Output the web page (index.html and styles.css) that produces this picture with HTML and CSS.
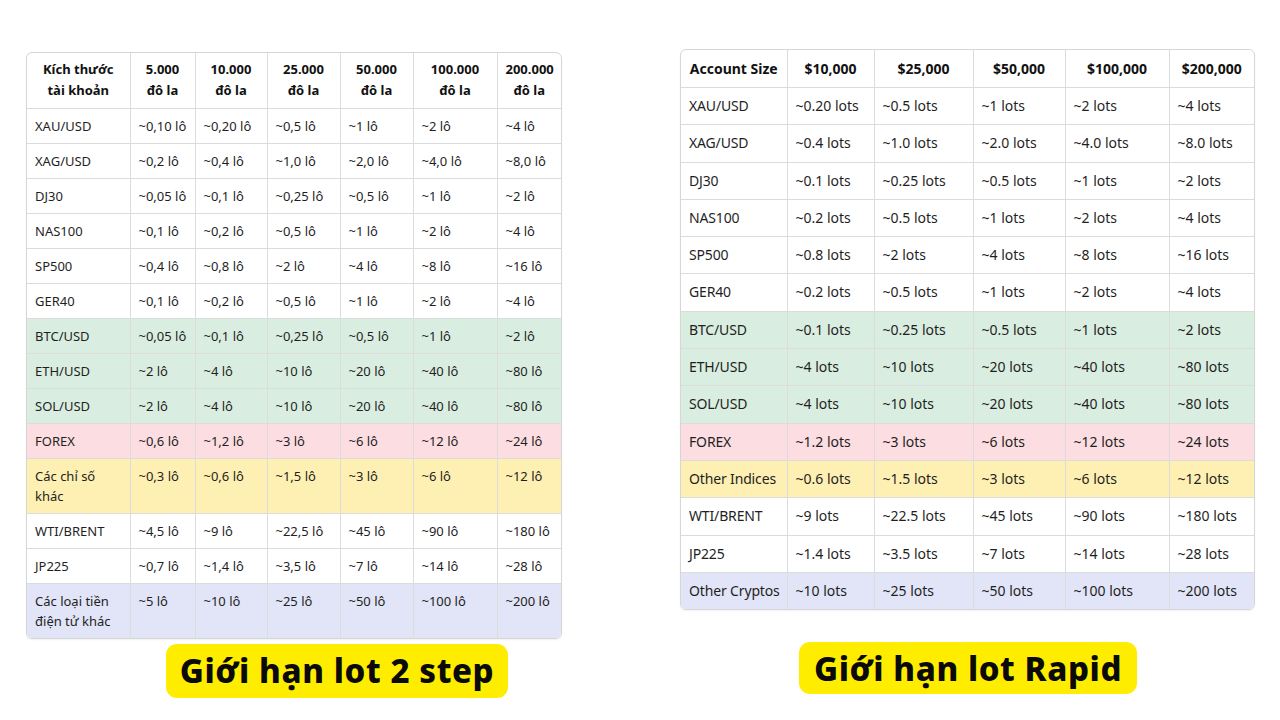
FILE: index.html
```html
<!DOCTYPE html>
<html lang="vi">
<head>
<meta charset="utf-8">
<title>Giới hạn lot</title>
<link rel="stylesheet" href="styles.css">
</head>
<body>
<div class="page">
  <section class="col col-left">
    <div class="tbl-wrap">
      <table class="tbl tbl-vn">
        <colgroup>
          <col class="c1"><col class="c2"><col class="c3"><col class="c4"><col class="c5"><col class="c6"><col class="c7">
        </colgroup>
        <thead>
          <tr><th>Kích thước tài khoản</th><th>5.000<br>đô la</th><th>10.000<br>đô la</th><th>25.000<br>đô la</th><th>50.000<br>đô la</th><th>100.000<br>đô la</th><th>200.000<br>đô la</th></tr>
        </thead>
        <tbody>
          <tr><td>XAU/USD</td><td>~0,10 lô</td><td>~0,20 lô</td><td>~0,5 lô</td><td>~1 lô</td><td>~2 lô</td><td>~4 lô</td></tr>
          <tr><td>XAG/USD</td><td>~0,2 lô</td><td>~0,4 lô</td><td>~1,0 lô</td><td>~2,0 lô</td><td>~4,0 lô</td><td>~8,0 lô</td></tr>
          <tr><td>DJ30</td><td>~0,05 lô</td><td>~0,1 lô</td><td>~0,25 lô</td><td>~0,5 lô</td><td>~1 lô</td><td>~2 lô</td></tr>
          <tr><td>NAS100</td><td>~0,1 lô</td><td>~0,2 lô</td><td>~0,5 lô</td><td>~1 lô</td><td>~2 lô</td><td>~4 lô</td></tr>
          <tr><td>SP500</td><td>~0,4 lô</td><td>~0,8 lô</td><td>~2 lô</td><td>~4 lô</td><td>~8 lô</td><td>~16 lô</td></tr>
          <tr><td>GER40</td><td>~0,1 lô</td><td>~0,2 lô</td><td>~0,5 lô</td><td>~1 lô</td><td>~2 lô</td><td>~4 lô</td></tr>
          <tr class="green"><td>BTC/USD</td><td>~0,05 lô</td><td>~0,1 lô</td><td>~0,25 lô</td><td>~0,5 lô</td><td>~1 lô</td><td>~2 lô</td></tr>
          <tr class="green"><td>ETH/USD</td><td>~2 lô</td><td>~4 lô</td><td>~10 lô</td><td>~20 lô</td><td>~40 lô</td><td>~80 lô</td></tr>
          <tr class="green"><td>SOL/USD</td><td>~2 lô</td><td>~4 lô</td><td>~10 lô</td><td>~20 lô</td><td>~40 lô</td><td>~80 lô</td></tr>
          <tr class="pink"><td>FOREX</td><td>~0,6 lô</td><td>~1,2 lô</td><td>~3 lô</td><td>~6 lô</td><td>~12 lô</td><td>~24 lô</td></tr>
          <tr class="yellow"><td>Các chỉ số khác</td><td>~0,3 lô</td><td>~0,6 lô</td><td>~1,5 lô</td><td>~3 lô</td><td>~6 lô</td><td>~12 lô</td></tr>
          <tr><td>WTI/BRENT</td><td>~4,5 lô</td><td>~9 lô</td><td>~22,5 lô</td><td>~45 lô</td><td>~90 lô</td><td>~180 lô</td></tr>
          <tr><td>JP225</td><td>~0,7 lô</td><td>~1,4 lô</td><td>~3,5 lô</td><td>~7 lô</td><td>~14 lô</td><td>~28 lô</td></tr>
          <tr class="lavender"><td>Các loại tiền điện tử khác</td><td>~5 lô</td><td>~10 lô</td><td>~25 lô</td><td>~50 lô</td><td>~100 lô</td><td>~200 lô</td></tr>
        </tbody>
      </table>
    </div>
    <div class="label label-left">Giới hạn lot 2 step</div>
  </section>

  <section class="col col-right">
    <div class="tbl-wrap">
      <table class="tbl tbl-en">
        <colgroup>
          <col class="d1"><col class="d2"><col class="d3"><col class="d4"><col class="d5"><col class="d6">
        </colgroup>
        <thead>
          <tr><th>Account Size</th><th>$10,000</th><th>$25,000</th><th>$50,000</th><th>$100,000</th><th>$200,000</th></tr>
        </thead>
        <tbody>
          <tr><td>XAU/USD</td><td>~0.20 lots</td><td>~0.5 lots</td><td>~1 lots</td><td>~2 lots</td><td>~4 lots</td></tr>
          <tr><td>XAG/USD</td><td>~0.4 lots</td><td>~1.0 lots</td><td>~2.0 lots</td><td>~4.0 lots</td><td>~8.0 lots</td></tr>
          <tr><td>DJ30</td><td>~0.1 lots</td><td>~0.25 lots</td><td>~0.5 lots</td><td>~1 lots</td><td>~2 lots</td></tr>
          <tr><td>NAS100</td><td>~0.2 lots</td><td>~0.5 lots</td><td>~1 lots</td><td>~2 lots</td><td>~4 lots</td></tr>
          <tr><td>SP500</td><td>~0.8 lots</td><td>~2 lots</td><td>~4 lots</td><td>~8 lots</td><td>~16 lots</td></tr>
          <tr><td>GER40</td><td>~0.2 lots</td><td>~0.5 lots</td><td>~1 lots</td><td>~2 lots</td><td>~4 lots</td></tr>
          <tr class="green"><td>BTC/USD</td><td>~0.1 lots</td><td>~0.25 lots</td><td>~0.5 lots</td><td>~1 lots</td><td>~2 lots</td></tr>
          <tr class="green"><td>ETH/USD</td><td>~4 lots</td><td>~10 lots</td><td>~20 lots</td><td>~40 lots</td><td>~80 lots</td></tr>
          <tr class="green"><td>SOL/USD</td><td>~4 lots</td><td>~10 lots</td><td>~20 lots</td><td>~40 lots</td><td>~80 lots</td></tr>
          <tr class="pink"><td>FOREX</td><td>~1.2 lots</td><td>~3 lots</td><td>~6 lots</td><td>~12 lots</td><td>~24 lots</td></tr>
          <tr class="yellow"><td>Other Indices</td><td>~0.6 lots</td><td>~1.5 lots</td><td>~3 lots</td><td>~6 lots</td><td>~12 lots</td></tr>
          <tr><td>WTI/BRENT</td><td>~9 lots</td><td>~22.5 lots</td><td>~45 lots</td><td>~90 lots</td><td>~180 lots</td></tr>
          <tr><td>JP225</td><td>~1.4 lots</td><td>~3.5 lots</td><td>~7 lots</td><td>~14 lots</td><td>~28 lots</td></tr>
          <tr class="lavender"><td>Other Cryptos</td><td>~10 lots</td><td>~25 lots</td><td>~50 lots</td><td>~100 lots</td><td>~200 lots</td></tr>
        </tbody>
      </table>
    </div>
    <div class="label label-right">Giới hạn lot Rapid</div>
  </section>
</div>
</body>
</html>
```

FILE: styles.css
```css
* { box-sizing: border-box; }

html, body {
  margin: 0;
  padding: 0;
  background: #ffffff;
}

body {
  font-family: "Noto Sans", "Open Sans", sans-serif;
  color: #1f1f1f;
  width: 1280px;
  height: 720px;
  overflow: hidden;
}

.page {
  display: flex;
  align-items: flex-start;
}

.col {
  display: flex;
  flex-direction: column;
  align-items: flex-start;
}

.col-left {
  margin-left: 26px;
  padding-top: 52px;
}

.col-right {
  margin-left: 118px;
  padding-top: 49px;
}

.tbl-wrap {
  border: 1px solid #d6d6d6;
  border-radius: 6px;
  overflow: hidden;
  box-shadow: 0 1px 2px rgba(0, 0, 0, 0.06);
}

.tbl {
  border-collapse: collapse;
  table-layout: fixed;
}

.tbl th,
.tbl td {
  border-right: 1px solid #dcdcdc;
  border-bottom: 1px solid #dcdcdc;
  text-align: left;
  vertical-align: top;
  padding: 7px 8px;
  font-weight: 400;
}

.tbl th:last-child,
.tbl td:last-child { border-right: none; }

.tbl tbody tr:last-child td { border-bottom: none; }

.tbl th {
  font-weight: 700;
  text-align: center;
  vertical-align: middle;
  color: #111;
}

/* left (Vietnamese) table */
.tbl-vn { width: 534px; font-size: 13px; }
.tbl-vn td { line-height: 20px; height: 35px; padding: 7px 8px 7px 8px; }
.tbl-vn th { line-height: 21px; height: 55px; padding: 5px 8px 6px 8px; font-size: 13px; }
.tbl-vn .c1 { width: 103px; }
.tbl-vn .c2 { width: 65px; }
.tbl-vn .c3 { width: 72px; }
.tbl-vn .c4 { width: 73px; }
.tbl-vn .c5 { width: 73px; }
.tbl-vn .c6 { width: 84px; }
.tbl-vn .c7 { width: 64px; }

/* right (English) table */
.tbl-en { width: 573px; font-size: 14px; }
.tbl-en td { line-height: 20.3px; padding: 8px 8px; white-space: nowrap; }
.tbl-en td:first-child { letter-spacing: -0.15px; }
.tbl-en th { line-height: 21px; padding: 8px 8px; font-size: 14px; white-space: nowrap; }
.tbl-en .d1 { width: 106px; }
.tbl-en .d2 { width: 87px; }
.tbl-en .d3 { width: 99px; }
.tbl-en .d4 { width: 92px; }
.tbl-en .d5 { width: 104px; }
.tbl-en .d6 { width: 85px; }

.green td { background: #d9eee0; }
.pink td { background: #fcdde1; }
.yellow td { background: #feefb3; }
.lavender td { background: #e1e5f7; }

/* labels */
.label {
  background: #ffed00;
  color: #0a0a0a;
  border-radius: 11px;
  font-family: "Noto Sans", "Inter", sans-serif;
  font-weight: 800;
  font-size: 33px;
  display: flex;
  align-items: center;
  justify-content: center;
  letter-spacing: 0.6px;
}

.label-left {
  width: 342px;
  height: 54px;
  margin-left: 140px;
  margin-top: 5px;
}

.label-right {
  width: 338px;
  height: 52px;
  margin-left: 119px;
  margin-top: 32px;
}
```
